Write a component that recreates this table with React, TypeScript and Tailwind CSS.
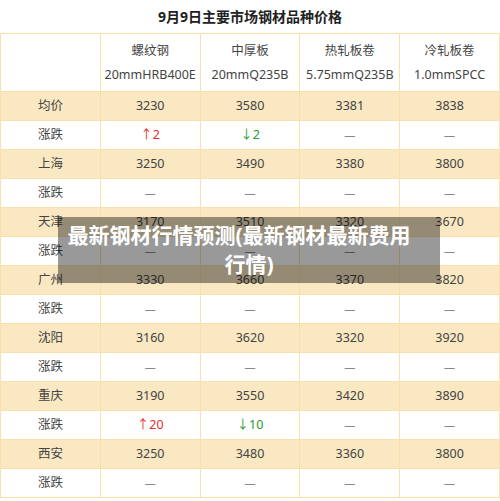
import React from "react";

type Cell = { t: string; c?: "up" | "down" | "dash" };
const rows: { name: string; vals: Cell[] }[] = [
  { name: "均价", vals: [{ t: "3230" }, { t: "3580" }, { t: "3381" }, { t: "3838" }] },
  { name: "涨跌", vals: [{ t: "↑2", c: "up" }, { t: "↓2", c: "down" }, { t: "—", c: "dash" }, { t: "—", c: "dash" }] },
  { name: "上海", vals: [{ t: "3250" }, { t: "3490" }, { t: "3380" }, { t: "3800" }] },
  { name: "涨跌", vals: [{ t: "—", c: "dash" }, { t: "—", c: "dash" }, { t: "—", c: "dash" }, { t: "—", c: "dash" }] },
  { name: "天津", vals: [{ t: "3170" }, { t: "3510" }, { t: "3320" }, { t: "3670" }] },
  { name: "涨跌", vals: [{ t: "—", c: "dash" }, { t: "—", c: "dash" }, { t: "—", c: "dash" }, { t: "—", c: "dash" }] },
  { name: "广州", vals: [{ t: "3330" }, { t: "3660" }, { t: "3370" }, { t: "3820" }] },
  { name: "涨跌", vals: [{ t: "—", c: "dash" }, { t: "—", c: "dash" }, { t: "—", c: "dash" }, { t: "—", c: "dash" }] },
  { name: "沈阳", vals: [{ t: "3160" }, { t: "3620" }, { t: "3320" }, { t: "3920" }] },
  { name: "涨跌", vals: [{ t: "—", c: "dash" }, { t: "—", c: "dash" }, { t: "—", c: "dash" }, { t: "—", c: "dash" }] },
  { name: "重庆", vals: [{ t: "3190" }, { t: "3550" }, { t: "3420" }, { t: "3890" }] },
  { name: "涨跌", vals: [{ t: "↑20", c: "up" }, { t: "↓10", c: "down" }, { t: "—", c: "dash" }, { t: "—", c: "dash" }] },
  { name: "西安", vals: [{ t: "3250" }, { t: "3480" }, { t: "3360" }, { t: "3800" }] },
  { name: "涨跌", vals: [{ t: "—", c: "dash" }, { t: "—", c: "dash" }, { t: "—", c: "dash" }, { t: "—", c: "dash" }] },
];

const heads = [
  ["螺纹钢", "20mmHRB400E"],
  ["中厚板", "20mmQ235B"],
  ["热轧板卷", "5.75mmQ235B"],
  ["冷轧板卷", "1.0mmSPCC"],
];

function Val({ v }: { v: Cell }) {
  if (v.c === "up") return <span className="text-[#f02a2a]">{v.t}</span>;
  if (v.c === "down") return <span className="text-[#2a9a2a]">{v.t}</span>;
  if (v.c === "dash") return <span className="text-[#888] text-[11px]">{v.t}</span>;
  return <span>{v.t}</span>;
}

export default function App() {
  return (
    <div
      className="relative w-[500px] h-[501px] bg-white overflow-hidden text-[#444]"
      style={{ fontFamily: '"Noto Sans", "Noto Sans CJK SC", sans-serif' }}
    >
      <div className="h-[33px] flex items-center justify-center text-[14px] font-bold text-[#222]">
        9月9日主要市场钢材品种价格
      </div>
      <div className="border-t border-l border-[#fae0ad] text-[12.5px]">
        <div className="flex h-[58px] border-b border-[#fae0ad]">
          <div className="w-[100px] border-r border-[#fae0ad]" />
          {heads.map((h, i) => (
            <div key={i} className="w-[100px] border-r border-[#fae0ad] flex flex-col items-center justify-center gap-[6px] leading-[18px]">
              <span>{h[0]}</span>
              <span>{h[1]}</span>
            </div>
          ))}
        </div>
        {rows.map((r, i) => (
          <div
            key={i}
            className={
              "flex h-[29px] border-b border-[#fae0ad] " + (i % 2 === 0 ? "bg-[#f9e8c2]" : "bg-white")
            }
          >
            <div className="w-[100px] border-r border-[#fae0ad] flex items-center justify-center">
              {r.name}
            </div>
            {r.vals.map((v, j) => (
              <div key={j} className="w-[100px] border-r border-[#fae0ad] flex items-center justify-center">
                <Val v={v} />
              </div>
            ))}
          </div>
        ))}
      </div>
      <div className="absolute left-[58px] top-[217px] w-[382px] h-[66px] bg-[rgba(0,0,0,0.4)] flex flex-col items-center justify-center">
        <span className="block text-white font-bold text-[21px] leading-[29px] text-center whitespace-nowrap pr-[20px]">
          最新钢材行情预测(最新钢材最新费用
        </span>
        <span className="block text-white font-bold text-[21px] leading-[29px] text-center whitespace-nowrap">
          行情)
        </span>
      </div>
    </div>
  );
}
